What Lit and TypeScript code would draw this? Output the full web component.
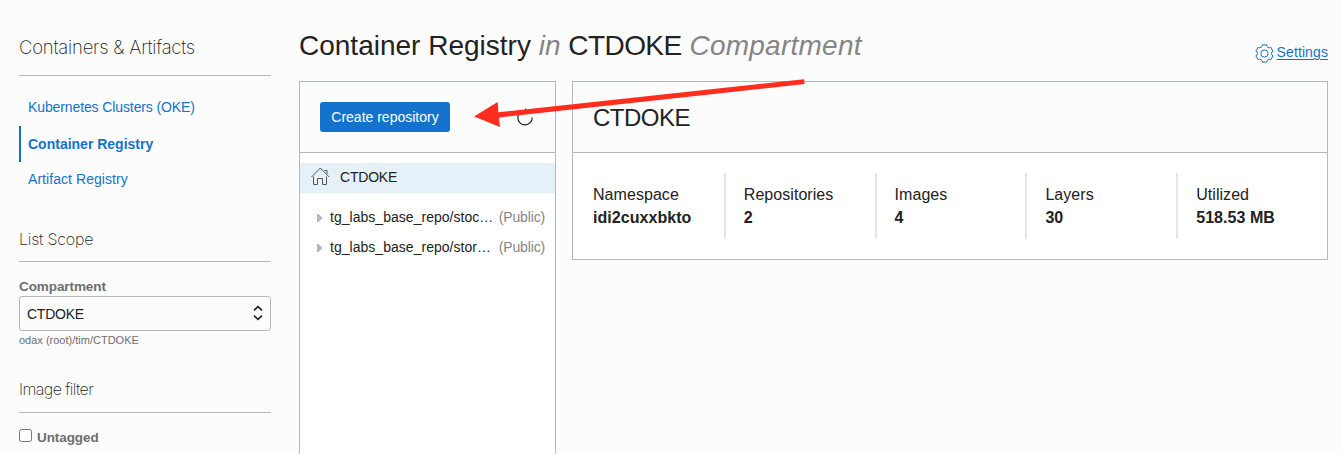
import { LitElement, html, css, svg } from "lit";
import { customElement } from "lit/decorators.js";

const stats = [
  ["Namespace", "idi2cuxxbkto"],
  ["Repositories", "2"],
  ["Images", "4"],
  ["Layers", "30"],
  ["Utilized", "518.53 MB"],
];

const repos = ["tg_labs_base_repo/stoc…", "tg_labs_base_repo/stor…"];

// Six-toothed outline gear centred on (9.5, 9.5).
const gearPath = (() => {
  const pts: string[] = [];
  const at = (deg: number, r: number) => {
    const a = (deg * Math.PI) / 180;
    return `${(9.5 + r * Math.cos(a)).toFixed(2)} ${(9.5 + r * Math.sin(a)).toFixed(2)}`;
  };
  for (let i = 0; i < 6; i++) {
    const c = i * 60 - 90;
    pts.push(`${i ? "L" : "M"}${at(c - 15, 8.9)}L${at(c + 15, 8.9)}L${at(c + 18, 7.6)}Q${at(c + 30, 6.6)} ${at(c + 42, 7.6)}`);
  }
  return pts.join("") + "Z";
})();

const gear = svg`<path d=${gearPath} stroke-linejoin="round"/><circle cx="9.5" cy="9.5" r="3.6"/>`;

@customElement("app-root")
export class AppRoot extends LitElement {
  static styles = css`
    :host {
      display: block;
      position: relative;
      height: 454px;
      overflow: hidden;
      background: #fcfcfc;
      color: #222;
      font: 14px/20px "Liberation Sans", Arial, sans-serif;
    }
    * { box-sizing: border-box; }
    .page { display: flex; gap: 28px; height: 100%; padding: 0 14px 0 19px; }
    .side { width: 252px; flex: none; }
    h2 {
      margin: 0;
      border-bottom: 1px solid #b1b8c4;
      font: 200 16px/24px Inter, "Liberation Sans", sans-serif;
      color: #222;
    }
    .title { height: 76px; padding-top: 35px; font-size: 18.5px; letter-spacing: -0.22px; }
    .scope { margin-top: 34px; height: 35px; font-size: 16px; letter-spacing: -0.2px; }
    .filter { margin-top: 29px; height: 36px; font-size: 16px; letter-spacing: -0.6px; }
    nav { margin-top: 14px; display: flex; flex-direction: column; height: 103px; }
    nav a { height: 36px; line-height: 35px; padding-left: 9px; color: #1373cc; text-decoration: none; flex: none; }
    nav a.active { border-left: 2px solid #1373cc; padding-left: 7px; font-weight: bold; line-height: 37px; }
    nav a:first-child { letter-spacing: -0.11px; }
    nav a:last-child { letter-spacing: 0.06px; }
    .label { font-weight: bold; color: #6e6e6e; font-size: 13.5px; letter-spacing: -0.08px; }
    .field { margin-top: 15px; line-height: 19px; display: block; }
    .select {
      height: 35px;
      border: 1px solid #b1b8c4;
      border-radius: 3px;
      display: flex;
      align-items: center;
      justify-content: space-between;
      padding: 0 6px 0 7px;
      letter-spacing: -0.25px;
    }
    .select svg { margin-top: -2px; }
    .hint { font-size: 11px; line-height: 16px; color: #6e6e6e; padding-top: 1px; }
    .check { display: flex; align-items: center; gap: 5px; margin-top: 15px; }
    .box { width: 13px; height: 13px; border: 1px solid #767676; border-radius: 2.5px; background: #fff; margin-top: -5px; }
    .main { flex: 1; min-width: 0; display: flex; flex-direction: column; }
    .head { height: 81px; display: flex; justify-content: space-between; flex: none; }
    h1 { margin: 0; padding-top: 29px; font: 400 28px/34px "Liberation Sans", Arial, sans-serif; white-space: nowrap; }
    h1 em { color: #858585; }
    .tight { letter-spacing: -0.55px; }
    .wide { letter-spacing: 0.25px; }
    .settings { display: flex; align-items: center; gap: 3px; height: 20px; margin-top: 43px; color: #1373cc; text-decoration: none; letter-spacing: 0.1px; }
    .settings span { text-decoration: underline; text-underline-offset: 2px; margin-top: -2px; }
    .settings svg { margin-top: 0; margin-left: -1px; }
    svg { display: block; flex: none; }
    .cols { display: flex; gap: 16px; flex: 1; align-items: flex-start; }
    .panel { border: 1px solid #b1b8c4; background: #fff; }
    .tree { width: 257px; height: 100%; border-bottom: 0; }
    .detail { flex: 1; height: 179px; }
    .bar { height: 71px; border-bottom: 1px solid #b1b8c4; background: #fcfcfc; display: flex; align-items: center; justify-content: space-between; padding: 0 20px; }
    button { width: 130px; height: 30px; border: 0; border-radius: 3px; background: #1373cc; color: #fff; font: inherit; padding: 0; }
    .name { font-size: 24px; letter-spacing: -0.5px; padding-top: 2px; }
    .root { margin-top: 10px; height: 30px; background: #e6f0f9; display: flex; align-items: center; gap: 10px; padding: 0 0 2px 11px; letter-spacing: -0.2px; }
    .root svg { margin-top: -1px; }
    .rows { padding-top: 9px; }
    .row { height: 30px; display: flex; align-items: center; padding: 0 10px 0 17px; }
    .row svg { margin-top: 1px; }
    .row .repo { margin-left: 7px; flex: 1; white-space: nowrap; letter-spacing: 0.03px; }
    .row .vis { color: #858585; letter-spacing: -0.15px; }
    .stats { display: grid; grid-template-columns: repeat(5, 1fr); padding: 20px 0; font-size: 16px; line-height: 23px; }
    .stat { height: 66px; padding: 10px 0 0 18px; border-left: 2px solid #e6e6e6; letter-spacing: 0.05px; }
    .stat:first-child { border-color: transparent; }
    .stat b { display: block; }
    .arrow { position: absolute; left: 470px; top: 74px; }
  `;

  render() {
    return html`
      <div class="page">
        <aside class="side">
          <h2 class="title">Containers &amp; Artifacts</h2>
          <nav>
            <a>Kubernetes Clusters (OKE)</a>
            <a class="active">Container Registry</a>
            <a>Artifact Registry</a>
          </nav>
          <h2 class="scope">List Scope</h2>
          <span class="label field">Compartment</span>
          <div class="select">
            <span>CTDOKE</span>
            <svg width="12" height="16" viewBox="0 0 12 16" fill="none" stroke="#222" stroke-width="1.6">
              <path d="M2 5.3 6 1.6l4 3.7M2 10.7l4 3.7 4-3.7" />
            </svg>
          </div>
          <div class="hint">odax (root)/tim/CTDOKE</div>
          <h2 class="filter">Image filter</h2>
          <div class="check"><span class="box"></span><span class="label">Untagged</span></div>
        </aside>
        <main class="main">
          <div class="head">
            <h1>Container Registry <em>in</em> <span class="tight">CTDOKE</span> <em class="wide">Compartment</em></h1>
            <a class="settings">
              <svg width="19" height="19" viewBox="0 0 19 19" fill="none" stroke="#1373cc" stroke-width="1">${gear}</svg>
              <span>Settings</span>
            </a>
          </div>
          <div class="cols">
            <section class="panel tree">
              <div class="bar">
                <button>Create repository</button>
                <svg width="20" height="20" viewBox="0 0 20 20" fill="none" stroke="#222" stroke-width="1.2">
                  <path d="M17.200 10.500A7.200 7.200 0 1 1 10 3.500" />
                  <path d="M10 1v4.800l2.400-2.400z" fill="#222" stroke="none" />
                </svg>
              </div>
              <div class="root">
                <svg width="19" height="19" viewBox="0 0 19 19" fill="none" stroke="#555" stroke-width="1">
                  <path d="M.5 10 9.3 1l8.900 9M2.500 9.500v8h4v-6h5v6h4v-8M13.500 3.500h2.500v3.500" />
                </svg>
                <span>CTDOKE</span>
              </div>
              <div class="rows">
                ${repos.map((r) => html`<div class="row">
                  <svg width="6" height="8" viewBox="0 0 6 8"><path d="M0 0h1.500l4 4-4 4H0z" fill="#b1b8c4" /></svg>
                  <span class="repo">${r}</span><span class="vis">(Public)</span>
                </div>`)}
              </div>
            </section>
            <section class="panel detail">
              <div class="bar"><span class="name">CTDOKE</span></div>
              <div class="stats">
                ${stats.map(([k, v]) => html`<div class="stat">${k}<b>${v}</b></div>`)}
              </div>
            </section>
          </div>
        </main>
      </div>
      <svg class="arrow" width="340" height="56" viewBox="470 74 340 56" fill="#ff2d1e">
        <path d="M474 116.500 497.700 102l.7 10.200L804 79.200l.7 4.900L499 117.400l1 9.500z" />
      </svg>
    `;
  }
}
